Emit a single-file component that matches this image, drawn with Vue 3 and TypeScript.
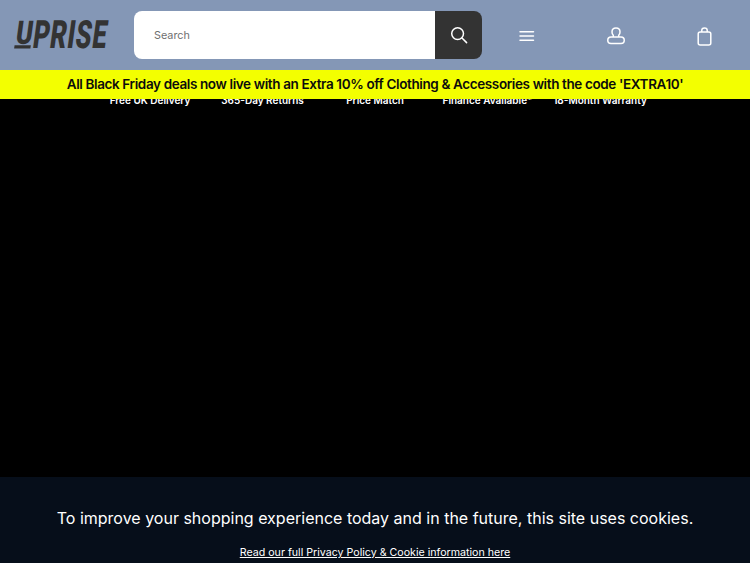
<script setup lang="ts">
const perks: string[] = ['Free UK Delivery', '365-Day Returns', 'Price Match', 'Finance Available*', '18-Month Warranty']
</script>

<template>
  <div class="page">
    <header class="header">
      <a class="logo"><span class="logo-text"><span class="logo-u">U</span>PRISE</span></a>
      <form class="search" @submit.prevent>
        <div class="search-field">Search</div>
        <button class="search-btn" aria-label="Search">
          <svg width="18" height="18" viewBox="0 0 18 18" fill="none" stroke="#fff" stroke-width="1.5" stroke-linecap="round">
            <circle cx="7.6" cy="7.6" r="5.9" />
            <path d="M12 12l4.6 4.6" />
          </svg>
        </button>
      </form>
      <nav class="icons">
        <span class="icon">
          <svg width="16" height="12" viewBox="0 0 16 12" fill="none" stroke="#fff" stroke-width="1.5" stroke-linecap="round">
            <path d="M1 1.700h13.500M1 6h13.500M1 10.300h13.500" />
          </svg>
        </span>
        <span class="icon">
          <svg width="18" height="18" viewBox="0 0 18 18" fill="none" stroke="#fff" stroke-width="1.5" stroke-linejoin="round">
            <path d="M6.300 10V8.200C5.400 7.400 5 6.200 5 4.900 5 2.600 6.700 1 9 1s4 1.600 4 3.900c0 1.300-.4 2.500-1.300 3.300V10" />
            <rect x="0.750" y="10" width="16.500" height="6.500" rx="3.250" />
          </svg>
        </span>
        <span class="icon">
          <svg width="15" height="19" viewBox="0 0 15 19" fill="none" stroke="#fff" stroke-width="1.5" stroke-linejoin="round">
            <rect x="1.200" y="5" width="12.600" height="13" rx="2" />
            <path d="M4.800 5V3.200C4.800 1.800 5.800 1 7.500 1s2.700.8 2.700 2.200V5" />
          </svg>
        </span>
      </nav>
    </header>
    <div class="banner">All Black Friday deals now live with an Extra 10% off Clothing &amp; Accessories with the code 'EXTRA10'</div>
    <ul class="perks">
      <li v-for="p in perks" :key="p">{{ p }}</li>
    </ul>
    <div class="spacer"></div>
    <section class="cookie">
      <p class="cookie-title">To improve your shopping experience today and in the future, this site uses cookies.</p>
      <a class="cookie-link">Read our full Privacy Policy &amp; Cookie information here</a>
    </section>
  </div>
</template>

<style>
html, body { margin: 0; background: #000; }
</style>

<style scoped>
.page {
  width: 750px;
  height: 563px;
  overflow: hidden;
  display: flex;
  flex-direction: column;
  background: #000;
  font-family: Inter, "Liberation Sans", sans-serif;
}
.header {
  height: 70px;
  flex: none;
  display: flex;
  align-items: center;
  padding-left: 15px;
  box-sizing: border-box;
  background: #8497b6;
}
.logo {
  width: 119px;
  flex: none;
  display: block;
  height: 30px;
}
.logo-text {
  display: inline-block;
  font-family: Roboto, "Liberation Sans", sans-serif;
  font-weight: 900;
  font-size: 39px;
  line-height: 30px;
  letter-spacing: 1px;
  color: #333;
  transform-origin: 0 50%;
  transform: translateX(1px) scaleX(0.65) skewX(-12deg);
  white-space: nowrap;
}
.logo-u {
  position: relative;
  display: inline-block;
  transform-origin: 50% 0;
  transform: scaleY(0.84);
}
.logo-u::after {
  content: "";
  position: absolute;
  left: 0;
  right: 2px;
  bottom: -4px;
  height: 4px;
  background: #333;
}
.search {
  width: 348px;
  height: 48px;
  flex: none;
  display: flex;
}
.search-field {
  flex: 1;
  background: #fff;
  border-radius: 8px 0 0 8px;
  padding-left: 20px;
  display: flex;
  align-items: center;
  font-size: 10.800px;
  color: #6f6f6f;
}
.search-btn {
  width: 47px;
  flex: none;
  background: #333;
  border: 0;
  padding: 0;
  border-radius: 0 8px 8px 0;
  display: flex;
  align-items: center;
  justify-content: center;
}
.icons {
  flex: 1;
  display: flex;
  align-items: center;
  padding-top: 2px;
}
.icon {
  display: flex;
  align-items: center;
  justify-content: center;
  width: 89px;
  height: 24px;
}
.banner {
  position: relative;
  z-index: 1;
  flex: none;
  height: 28.500px;
  line-height: 28px;
  text-align: center;
  background: #f3ff00;
  color: #0c0c0c;
  font-weight: 600;
  font-size: 13.500px;
  letter-spacing: -0.38px;
  white-space: nowrap;
}
.perks {
  flex: none;
  list-style: none;
  margin: -6px 0 0;
  padding: 0 93.750px;
  height: 18px;
  display: grid;
  grid-template-columns: repeat(5, 112.500px);
  color: #fff;
  font-size: 10px;
  font-weight: 600;
  line-height: 14px;
  text-align: center;
  white-space: nowrap;
}
.spacer { flex: 1; }
.cookie {
  flex: none;
  height: 86px;
  box-sizing: border-box;
  padding-top: 29px;
  background: #060e1a;
  text-align: center;
  color: #fff;
}
.cookie-title {
  margin: 0;
  font-size: 16px;
  line-height: 24px;
}
.cookie-link {
  display: block;
  margin-top: 15px;
  font-size: 10.650px;
  line-height: 16px;
  text-decoration: underline;
}
</style>
